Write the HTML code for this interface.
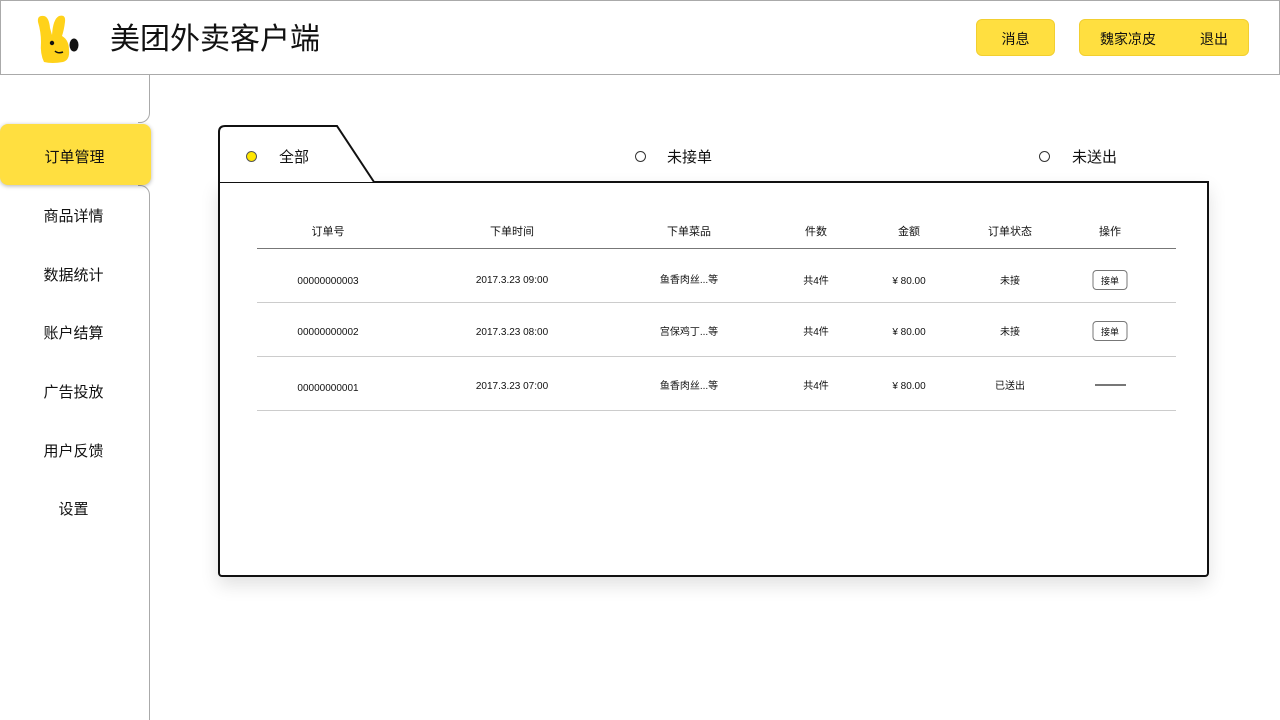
<!DOCTYPE html>
<html><head><meta charset="utf-8"><style>
*{margin:0;padding:0;box-sizing:border-box}
body{width:1280px;height:720px;background:#fff;position:relative;overflow:hidden;font-family:"Liberation Sans","Noto Sans CJK SC",sans-serif;color:#111}
.abs{position:absolute}
.hdr{left:0;top:0;width:1280px;height:75px;border:1px solid #aaa;background:#fff}
.btn{background:#ffdf40;border:1px solid #f2cf30;border-radius:6px;font-size:14px;display:flex;align-items:center;justify-content:center;padding-top:2px}
.nav{left:0;width:149px;text-align:center;font-size:15px;line-height:22px}
.c{position:absolute;transform:translateX(-50%);white-space:nowrap;line-height:16px}
.th{font-size:11px;top:224px}
.td{font-size:10px;margin-top:2px}
.line{position:absolute;left:257px;width:919px;height:1px;background:#ccc}
.jb{border:1px solid #777;border-radius:4px;width:35px;height:20px;font-size:9px;display:flex;align-items:center;justify-content:center;line-height:12px;padding-top:1px}
</style></head><body>
<div class="abs hdr"></div>
<svg class="abs" style="left:36px;top:14px" width="44" height="50" viewBox="0 0 44 50">
<path d="M2 8 Q1 1 8 2 Q13 3 14 14 L16 21 Q17 5 23 2 Q30 0 29 8 Q28 16 26 22 Q33 26 33 36 Q34 46 27 48 Q16 50 8 48 Q4 40 5 28 Q5 18 2 8Z" fill="#ffd21a"/>
<ellipse cx="38" cy="31" rx="4.5" ry="6.5" fill="#111"/>
<circle cx="16" cy="29" r="2.2" fill="#111"/>
<path d="M19 37 Q22 40 27 38" stroke="#111" stroke-width="1.5" fill="none"/>
</svg>
<div class="abs" style="left:110px;top:21px;font-size:30px;line-height:38px">美团外卖客户端</div>
<div class="abs btn" style="left:976px;top:19px;width:79px;height:37px">消息</div>
<div class="abs btn" style="left:1079px;top:19px;width:170px;height:37px"><span style="margin-right:44px">魏家凉皮</span><span>退出</span></div>

<div class="abs" style="left:138px;top:74px;width:12px;height:49px;border-right:1px solid #aaa;border-bottom:1px solid #aaa;border-bottom-right-radius:10px"></div>
<div class="abs" style="left:138px;top:185px;width:12px;height:535px;border-right:1px solid #aaa;border-top:1px solid #aaa;border-top-right-radius:10px"></div>
<div class="abs" style="left:0;top:124px;width:151px;height:61px;background:#ffdf40;border-radius:8px;box-shadow:0 1px 4px rgba(0,0,0,.3)"></div>
<div class="abs nav" style="top:147px">订单管理</div>
<div class="abs nav" style="top:206px;width:147px">商品详情</div>
<div class="abs nav" style="top:265px;width:147px">数据统计</div>
<div class="abs nav" style="top:323px;width:147px">账户结算</div>
<div class="abs nav" style="top:382px;width:147px">广告投放</div>
<div class="abs nav" style="top:441px;width:147px">用户反馈</div>
<div class="abs nav" style="top:499px;width:147px">设置</div>

<div class="abs" style="left:218px;top:181px;width:991px;height:396px;border:2px solid #111;border-radius:0 0 4px 4px;box-shadow:0 8px 18px rgba(0,0,0,.12)"></div>
<svg class="abs" style="left:217px;top:124px" width="162" height="60">
<path d="M2 58 L2 8 Q2 2 8 2 L120 2 L157 58" fill="#fff" stroke="#111" stroke-width="2"/>
</svg>
<div class="abs" style="left:246px;top:151px;width:11px;height:11px;border-radius:50%;background:#ffe600;border:1px solid #555"></div>
<div class="abs" style="left:279px;top:149px;font-size:15px;line-height:18px">全部</div>
<div class="abs" style="left:635px;top:151px;width:11px;height:11px;border-radius:50%;border:1px solid #333"></div>
<div class="abs" style="left:667px;top:149px;font-size:15px;line-height:18px">未接单</div>
<div class="abs" style="left:1039px;top:151px;width:11px;height:11px;border-radius:50%;border:1px solid #333"></div>
<div class="abs" style="left:1072px;top:149px;font-size:15px;line-height:18px">未送出</div>

<div class="c th" style="left:328px">订单号</div>
<div class="c th" style="left:512px">下单时间</div>
<div class="c th" style="left:689px">下单菜品</div>
<div class="c th" style="left:816px">件数</div>
<div class="c th" style="left:909px">金额</div>
<div class="c th" style="left:1010px">订单状态</div>
<div class="c th" style="left:1110px">操作</div>
<div class="line" style="top:248px;background:#777"></div>

<div class="c td" style="left:328px;top:272px">00000000003</div>
<div class="c td" style="left:512px;top:271px">2017.3.23 09:00</div>
<div class="c td" style="left:689px;top:271px">鱼香肉丝...等</div>
<div class="c td" style="left:816px;top:272px">共4件</div>
<div class="c td" style="left:909px;top:272px">¥ 80.00</div>
<div class="c td" style="left:1010px;top:272px">未接</div>
<div class="c jb" style="left:1110px;top:270px">接单</div>
<div class="line" style="top:302px"></div>

<div class="c td" style="left:328px;top:323px">00000000002</div>
<div class="c td" style="left:512px;top:323px">2017.3.23 08:00</div>
<div class="c td" style="left:689px;top:323px">宫保鸡丁...等</div>
<div class="c td" style="left:816px;top:323px">共4件</div>
<div class="c td" style="left:909px;top:323px">¥ 80.00</div>
<div class="c td" style="left:1010px;top:323px">未接</div>
<div class="c jb" style="left:1110px;top:321px">接单</div>
<div class="line" style="top:356px"></div>

<div class="c td" style="left:328px;top:379px">00000000001</div>
<div class="c td" style="left:512px;top:377px">2017.3.23 07:00</div>
<div class="c td" style="left:689px;top:377px">鱼香肉丝...等</div>
<div class="c td" style="left:816px;top:377px">共4件</div>
<div class="c td" style="left:909px;top:377px">¥ 80.00</div>
<div class="c td" style="left:1010px;top:377px">已送出</div>
<div class="abs" style="left:1095px;top:384px;width:31px;height:2px;background:#777"></div>
<div class="line" style="top:410px"></div>
</body></html>
